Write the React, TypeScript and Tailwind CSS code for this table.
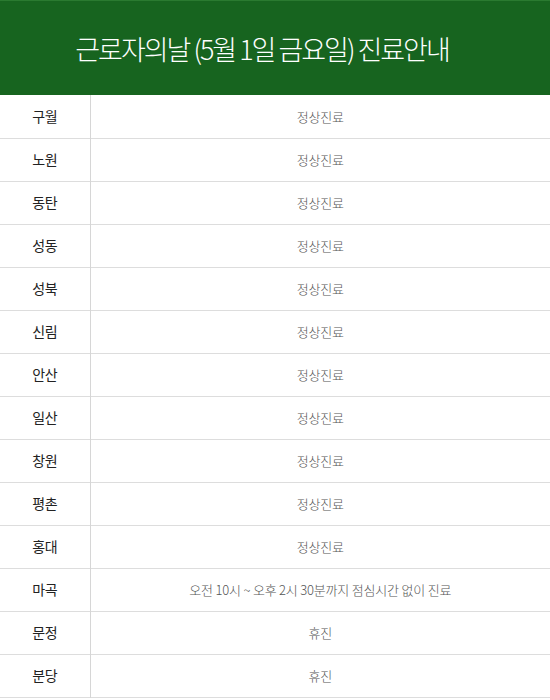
const ROWS: [string, string][] = [
  ['구월', '정상진료'],
  ['노원', '정상진료'],
  ['동탄', '정상진료'],
  ['성동', '정상진료'],
  ['성북', '정상진료'],
  ['신림', '정상진료'],
  ['안산', '정상진료'],
  ['일산', '정상진료'],
  ['창원', '정상진료'],
  ['평촌', '정상진료'],
  ['홍대', '정상진료'],
  ['마곡', '오전 10시 ~ 오후 2시 30분까지 점심시간 없이 진료'],
  ['문정', '휴진'],
  ['분당', '휴진'],
];

export default function App() {
  return (
    <div className="w-[550px] bg-white font-['Noto_Sans_CJK_KR','Noto_Sans',sans-serif]">
      {/* 타이틀 */}
      <div className="h-[95px] bg-[#17641f] border-t border-[#2a7a30] flex items-center justify-center">
        <h1 className="text-white text-[27px] font-light tracking-[-2px] leading-none pr-[26px]">
          근로자의날 (5월 1일 금요일) 진료안내
        </h1>
      </div>

      {/* 지점별 진료 */}
      <table className="w-full border-collapse">
        <tbody>
          {ROWS.map(([name, info]) => (
            <tr key={name} className="h-[43px] border-b border-[#dddddd]">
              <td className="w-[90px] border-r border-[#d6d6d6] text-center text-[14px] text-[#222] tracking-[-0.5px]">{name}</td>
              <td className="text-center text-[13px] font-light text-[#555] tracking-[-0.2px]">{info}</td>
            </tr>
          ))}
        </tbody>
      </table>
    </div>
  );
}
